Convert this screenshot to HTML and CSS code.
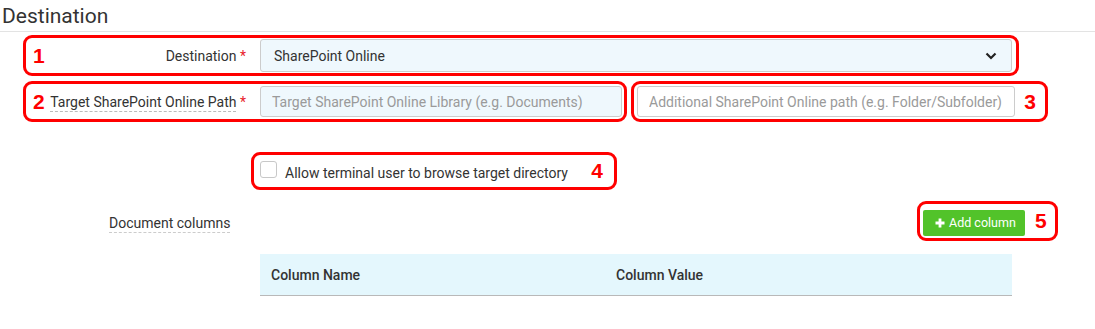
FILE: index.html
```html
<!DOCTYPE html>
<html lang="en">
	<head>
		<meta charset="utf-8">
		<title>Destination</title>
		<link rel="stylesheet" href="styles.css">
	</head>
	<body>
		<h2 class="section-title">Destination</h2>

		<div class="form">
			<!-- Destination select -->
			<div class="mark mark-row1">
				<span class="num">1</span>
				<label class="label">Destination <span class="req">*</span></label>
				<div class="select">
					<span>SharePoint Online</span>
					<svg class="chevron" width="12" height="8" viewBox="0 0 12 8">
						<path d="M1.5 1.5 L6 6 L10.5 1.5" fill="none" stroke="#222" stroke-width="2.2"/>
					</svg>
				</div>
			</div>

			<!-- Target path -->
			<div class="path-row">
				<div class="mark mark-row2">
					<span class="num">2</span>
					<label class="label"><span class="hint">Target SharePoint Online Path</span> <span class="req">*</span></label>
					<input class="field field-blue" type="text" placeholder="Target SharePoint Online Library (e.g. Documents)">
				</div>
				<div class="mark mark-row3">
					<input class="field field-extra" type="text" placeholder="Additional SharePoint Online path (e.g. Folder/Subfolder)">
					<span class="num num-after">3</span>
				</div>
			</div>

			<!-- Browse checkbox -->
			<div class="mark mark-check">
				<span class="checkbox"></span>
				<span class="check-text">Allow terminal user to browse target directory</span>
				<span class="num num-after">4</span>
			</div>

			<!-- Document columns -->
			<div class="columns-row">
				<span class="doc-label">Document columns</span>
				<div class="mark mark-add">
					<button class="btn-add">
						<svg width="10" height="10" viewBox="0 0 10 10">
							<path d="M5 0.5 V9.5 M0.5 5 H9.5" stroke="#fff" stroke-width="2.8"/>
						</svg>
						Add column
					</button>
					<span class="num num-after">5</span>
				</div>
			</div>

			<table class="col-table">
				<thead>
					<tr>
						<th class="col-name">Column Name</th>
						<th>Column Value</th>
					</tr>
				</thead>
			</table>
		</div>
	</body>
</html>
```

FILE: styles.css
```css
body {
	margin: 0;
	font-family: Roboto, "Liberation Sans", sans-serif;
	color: #333;
	background: #fff;
}

.section-title {
	margin: 0;
	padding: 4px 2px 3px;
	font-size: 21px;
	font-weight: 400;
	line-height: 24px;
	color: #333;
	border-bottom: 1px solid #e3e3e3;
}

.form {
	padding-top: 3px;
}

/* red annotation boxes */
.mark {
	box-sizing: border-box;
	display: flex;
	align-items: center;
	border: 3px solid #f00;
	border-radius: 9px;
}

.num {
	font-family: "Liberation Sans", Arial, sans-serif;
	font-weight: bold;
	font-size: 21px;
	color: #f00;
	width: 16px;
}

.num-after {
	width: auto;
	flex: none;
}

.label {
	width: 197px;
	text-align: right;
	margin-right: 14px;
	font-size: 14px;
	color: #333;
}

.req {
	color: #e8202a;
}

.hint {
	border-bottom: 1px dashed #bbb;
	padding-bottom: 1px;
}

.mark-row1 {
	margin-left: 23px;
	width: 996px;
	height: 41px;
	padding: 0 4px 0 7px;
}

.select {
	flex: 1;
	height: 33px;
	box-sizing: border-box;
	display: flex;
	align-items: center;
	justify-content: space-between;
	padding: 0 14px 0 13px;
	background: #eff8fd;
	border: 1px solid #ccc;
	border-radius: 3px;
	font-size: 14px;
	color: #333;
}

.path-row {
	display: flex;
	gap: 4px;
	margin-top: 5px;
	margin-left: 23px;
}

.mark-row2 {
	width: 604px;
	height: 41px;
	padding: 0 2px 0 7px;
}

.mark-row3 {
	width: 417px;
	height: 41px;
	padding: 0 9px 0 3px;
	gap: 9px;
}

.field {
	flex: 1;
	min-width: 0;
	height: 31px;
	box-sizing: border-box;
	padding: 0 11px;
	border: 1px solid #ccc;
	border-radius: 3px;
	background: #fff;
	font-family: Roboto, "Liberation Sans", sans-serif;
	font-size: 14px;
	color: #333;
}

.field-blue {
	background: #eff8fd;
}

.field-extra {
	padding: 0 6px 0 11px;
}

.field::placeholder {
	color: #9a9a9a;
}

.mark-check {
	margin: 30px 0 0 251px;
	width: 366px;
	height: 38px;
	padding: 0 11px 0 6px;
}

.checkbox {
	box-sizing: border-box;
	width: 17px;
	height: 17px;
	border: 1px solid #c8c8c8;
	border-radius: 3px;
	margin-top: -4px;
}

.check-text {
	flex: 1;
	margin-left: 8px;
	margin-top: 4px;
	font-size: 14px;
	color: #333;
}

.columns-row {
	display: flex;
	align-items: center;
	margin-top: 11px;
	padding-left: 109px;
}

.doc-label {
	font-size: 14px;
	color: #333;
	border-bottom: 1px dashed #ccc;
	padding-bottom: 1px;
	margin-top: 6px;
}

.mark-add {
	margin-left: auto;
	margin-right: 37px;
	width: 141px;
	height: 40px;
	padding: 0 11px 0 3px;
	gap: 10px;
}

.btn-add {
	box-sizing: border-box;
	display: flex;
	align-items: center;
	gap: 4px;
	height: 26px;
	width: 102px;
	flex: none;
	margin-top: 3px;
	padding: 0 0 0 12px;
	border: none;
	border-radius: 2px;
	background: #52c32a;
	color: #fff;
	font-family: Roboto, "Liberation Sans", sans-serif;
	font-size: 12.5px;
}

.col-table {
	margin: 13px 0 0 260px;
	width: 752px;
	border-collapse: collapse;
}

.col-table th {
	height: 41px;
	padding: 0 11px;
	text-align: left;
	background: #e4f7fd;
	border-bottom: 1px solid #b9b9b9;
	font-size: 14px;
	font-weight: 500;
	color: #333;
}

.col-table .col-name {
	width: 323px;
}
```
